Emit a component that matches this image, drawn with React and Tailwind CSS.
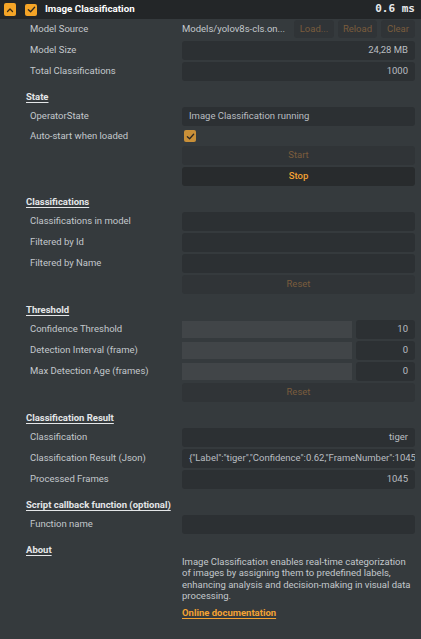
import React from 'react';

const Label = ({ children }) => (
  <div className="w-[156px] shrink-0 pl-[4px] truncate">{children}</div>
);

const Box = ({ children, align = 'right', className = '' }) => (
  <div
    className={`flex-1 h-[19px] rounded-[3px] bg-[#2c3033] flex items-center px-[7px] overflow-hidden whitespace-nowrap text-[#b9bdc1] ${
      align === 'right' ? 'justify-end' : 'justify-start'
    } ${className}`}
  >
    {children}
  </div>
);

const Row = ({ label, children, h = 'h-[19px]' }) => (
  <div className={`flex items-center ${h}`}>
    <Label>{label}</Label>
    <div className="flex-1 flex gap-[4px] min-w-0">{children}</div>
  </div>
);

const FieldRow = ({ label, value, align }) => (
  <Row label={label}>
    <Box align={align}>{value}</Box>
  </Row>
);

const Section = ({ title }) => (
  <div className="mt-[7px] h-[15px] flex items-center font-bold text-[#e4e6e8] underline underline-offset-[2px]">
    {title}
  </div>
);

const WideButton = ({ children, active }) => (
  <div className="flex items-center h-[19px]">
    <div className="w-[156px] shrink-0" />
    <div
      className={`flex-1 h-[19px] rounded-[3px] flex items-center justify-center ${
        active ? 'bg-[#282b2d] text-[#f3a233] font-medium' : 'bg-[#303437] text-[#7a5c3d]'
      }`}
    >
      {children}
    </div>
  </div>
);

const SliderRow = ({ label, value }) => (
  <Row label={label}>
    <div className="flex-1 h-[17px] self-center bg-[#414548]" />
    <div className="w-[59px] h-[19px] rounded-[3px] bg-[#2c3033] flex items-center justify-end px-[7px] text-[#b9bdc1]">
      {value}
    </div>
  </Row>
);

const Check = ({ className = '' }) => (
  <div className={`w-[12px] h-[12px] rounded-[2px] flex items-center justify-center ${className}`}>
    <svg width="9" height="9" viewBox="0 0 10 10" fill="none">
      <path d="M1.5 5.2 L4 7.5 L8.5 2.5" stroke="#2a2624" strokeWidth="1.4" strokeLinecap="round" strokeLinejoin="round" />
    </svg>
  </div>
);

const SmallButton = ({ children, w }) => (
  <div className={`${w} h-[18px] rounded-[3px] bg-[#303437] flex items-center justify-center text-[#7a5c3d]`}>
    {children}
  </div>
);

export default function App() {
  return (
    <div
      className="w-[421px] h-[639px] bg-[#353a3d] text-[9.5px] text-[#c3c8cc] overflow-hidden"
      style={{ fontFamily: 'Roboto, "Liberation Sans", sans-serif' }}
    >
      {/* title bar */}
      <div className="h-[19px] bg-[#232628] flex items-center pl-[4px] pr-[6px]">
        <div className="w-[12px] h-[13px] rounded-[2px] bg-[#f5a527] flex items-center justify-center">
          <svg width="8" height="6" viewBox="0 0 8 6" fill="none">
            <path d="M1.5 4.5 L4 2 L6.5 4.5" stroke="#3a2a14" strokeWidth="1.3" strokeLinecap="round" strokeLinejoin="round" />
          </svg>
        </div>
        <Check className="ml-[9px] bg-[#f5a527]" />
        <div className="ml-[8px] font-bold text-white text-[9.75px]">Image Classification</div>
        <div
          className="ml-auto font-bold text-[#e8eaec] text-[11px]"
          style={{ fontFamily: '"DejaVu Sans Mono", "Liberation Mono", monospace' }}
        >
          0.6 ms
        </div>
      </div>

      <div className="flex flex-col gap-[2px] pt-[1px] pl-[26px] pr-[6px]">
        <Row label="Model Source">
          <div className="flex-1 min-w-0 h-[19px] flex items-center whitespace-nowrap text-[#c3c8cc]">
            Models/yolov8s-cls.on...
          </div>
          <SmallButton w="w-[40px]">Load...</SmallButton>
          <SmallButton w="w-[39px]">Reload</SmallButton>
          <SmallButton w="w-[34px]">Clear</SmallButton>
        </Row>
        <FieldRow label="Model Size" value="24,28 MB" />
        <FieldRow label="Total Classifications" value="1000" />

        <Section title="State" />
        <FieldRow label="OperatorState" value="Image Classification running" align="left" />
        <Row label="Auto-start when loaded" h="h-[16px]">
          <Check className="ml-[2px] bg-[#c88f38]" />
        </Row>
        <WideButton>Start</WideButton>
        <WideButton active>Stop</WideButton>

        <Section title="Classifications" />
        <FieldRow label="Classifications in model" value="" />
        <FieldRow label="Filtered by Id" value="" />
        <FieldRow label="Filtered by Name" value="" />
        <WideButton>Reset</WideButton>

        <Section title="Threshold" />
        <SliderRow label="Confidence Threshold" value="10" />
        <SliderRow label="Detection Interval (frame)" value="0" />
        <SliderRow label="Max Detection Age (frames)" value="0" />
        <WideButton>Reset</WideButton>

        <Section title="Classification Result" />
        <FieldRow label="Classification" value="tiger" />
        <FieldRow
          label="Classification Result (Json)"
          value={'{"Label":"tiger","Confidence":0.62,"FrameNumber":1045}'}
          align="left"
        />
        <FieldRow label="Processed Frames" value="1045" />

        <Section title="Script callback function (optional)" />
        <FieldRow label="Function name" value="" />

        <Section title="About" />
        <div className="flex -mt-[4px]">
          <div className="w-[156px] shrink-0" />
          <div className="flex-1">
            <p className="leading-[11.4px] text-[#c3c8cc]">
              Image Classification enables real-time categorization of images by assigning them to predefined labels,
              enhancing analysis and decision-making in visual data processing.
            </p>
            <div className="mt-[4px] font-bold text-[#f3a233] underline underline-offset-[2px]">Online documentation</div>
          </div>
        </div>
      </div>
    </div>
  );
}
